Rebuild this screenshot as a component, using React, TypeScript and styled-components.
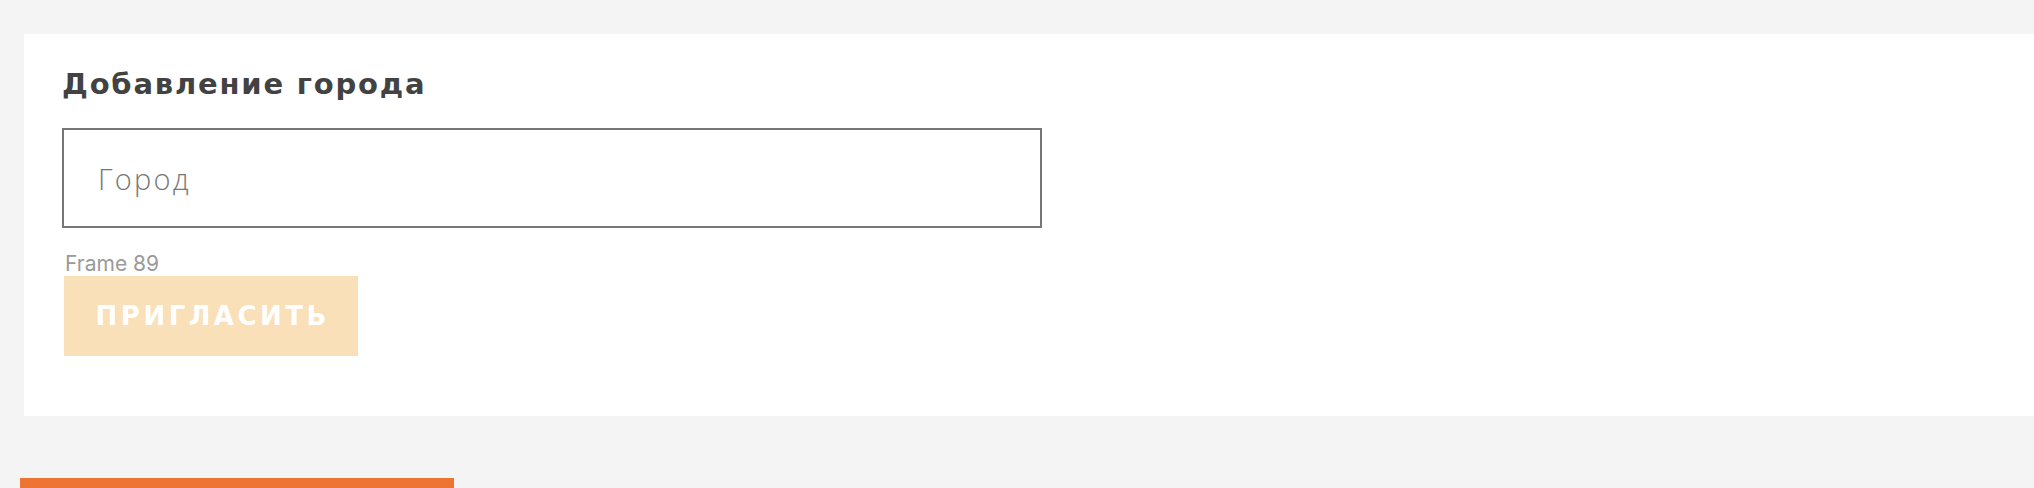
import React from "react";
import styled, { createGlobalStyle } from "styled-components";

const Global = createGlobalStyle`
  html, body {
    margin: 0;
    padding: 0;
    background: #f4f4f4;
  }
  * { box-sizing: border-box; }
`;

const Page = styled.div`
  width: 2034px;
  height: 488px;
  overflow: hidden;
  background: #f4f4f4;
  padding-top: 34px;
  display: flex;
  flex-direction: column;
`;

const Card = styled.section`
  flex-shrink: 0;
  margin-left: 24px;
  height: 382px;
  background: #ffffff;
  padding: 30px 0 0 38px;
  display: flex;
  flex-direction: column;
  align-items: flex-start;
`;

const Title = styled.h2`
  margin: 0;
  font-family: "DejaVu Sans", "Open Sans", sans-serif;
  font-weight: 700;
  font-size: 29px;
  line-height: 40px;
  letter-spacing: 1.8px;
  color: #424242;
`;

const CityInput = styled.input`
  margin-top: 24px;
  width: 980px;
  height: 100px;
  border: 2px solid #777777;
  border-radius: 0;
  padding: 0 0 0 34px;
  font-family: "Open Sans", sans-serif;
  font-weight: 300;
  font-size: 29px;
  letter-spacing: 2.2px;
  color: #555;
  background: #fff;
  outline: none;
  &::placeholder {
    color: #777777;
  }
`;

const Frame = styled.div`
  margin-top: 23px;
  margin-left: 2px;
  display: flex;
  flex-direction: column;
`;

const FrameLabel = styled.span`
  font-family: Inter, "Liberation Sans", sans-serif;
  font-size: 21px;
  line-height: 25px;
  color: #9a9a9a;
  padding-left: 1px;
`;

const InviteButton = styled.button<{ $spacing: number }>`
  width: 294px;
  height: 80px;
  border: none;
  padding: 0 0 0 ${(p) => p.$spacing}px;
  background: #f9e0b8;
  color: #ffffff;
  font-family: "DejaVu Sans", "Open Sans", sans-serif;
  font-weight: 700;
  font-size: 26px;
  letter-spacing: ${(p) => p.$spacing}px;
  text-transform: uppercase;
  cursor: default;
`;

const Footer = styled.div`
  flex-shrink: 0;
  margin-top: 62px;
  margin-left: 20px;
  width: 434px;
  height: 20px;
  background: #ee7433;
`;

export default function App() {
  return (
    <>
      <Global />
      <Page>
        <Card>
          <Title>Добавление города</Title>
          <CityInput placeholder="Город" />
          <Frame>
            <FrameLabel>Frame 89</FrameLabel>
            <InviteButton $spacing={3.5}>Пригласить</InviteButton>
          </Frame>
        </Card>
        <Footer />
      </Page>
    </>
  );
}
